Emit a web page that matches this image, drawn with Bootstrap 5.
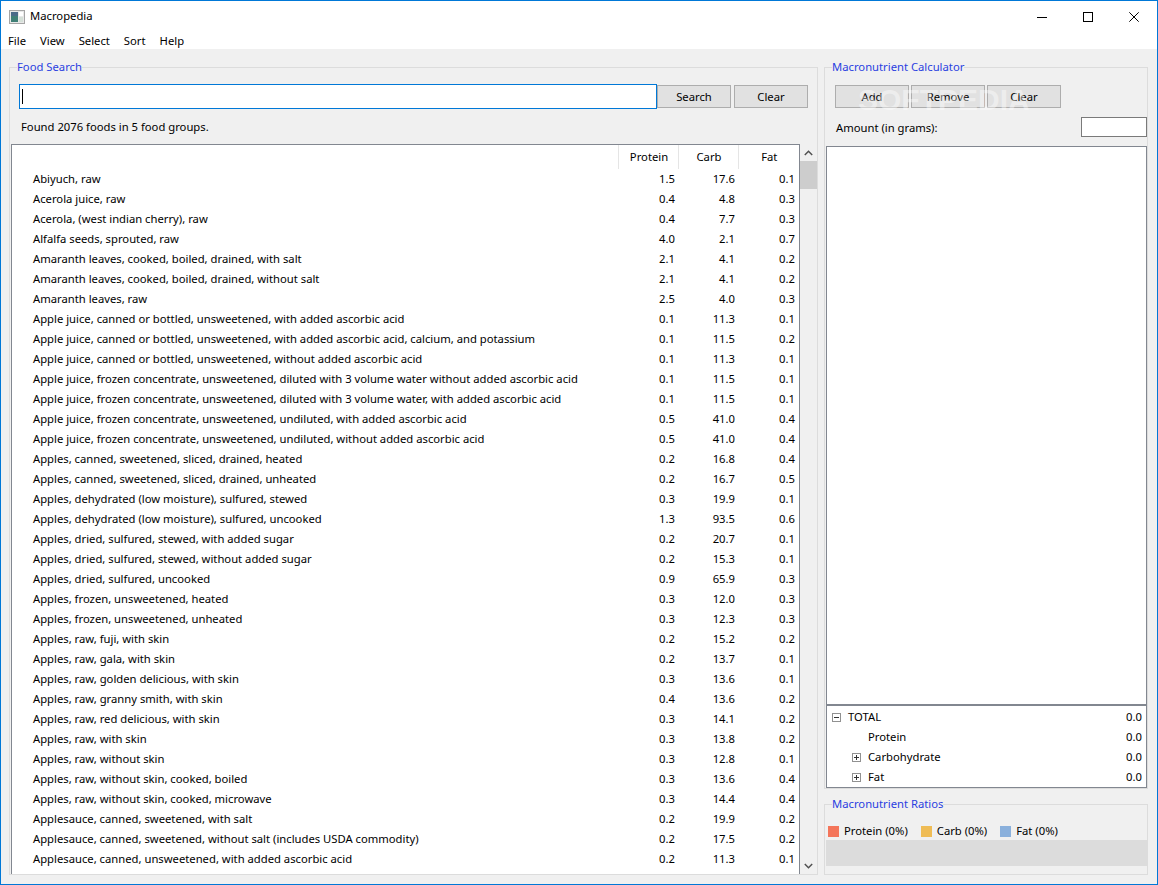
<!DOCTYPE html>
<html lang="en"><head><meta charset="utf-8"><title>Macropedia</title>
<link href="https://cdn.jsdelivr.net/npm/bootstrap@5.3.0/dist/css/bootstrap.min.css" rel="stylesheet">
<style>
html,body{margin:0;height:885px;overflow:hidden;background:#f0f0f0}
body{font-family:"Noto Sans","Liberation Sans",sans-serif;font-size:11.25px;line-height:16px;color:#000}
.app-win{height:885px;width:1158px;border:1px solid #0078d7;display:flex;flex-direction:column;background:#f0f0f0;position:relative}
.title-bar{height:31px;background:#fff;display:flex;align-items:center;padding-left:8px;flex:none}
.title-bar .t-name{margin-left:5px;padding-bottom:2px}
.win-ctl{margin-left:auto;display:flex}
.win-ctl span{width:46px;height:30px;display:flex;align-items:center;justify-content:center}
.menu-bar{height:17px;background:#fff;flex:none;display:flex;padding-left:7px;gap:14px;align-items:center;color:#000}
.work{flex:1;min-height:0;padding:10px 9px 9px 8px;display:flex;gap:6px}
.grp{border:1px solid #dcdcdc;margin:0;min-width:0;display:flex;flex-direction:column;padding:0}
.grp legend{float:none;width:auto;font-size:11.25px;line-height:16px;color:#2a3fe0;margin:0 0 0 7px;padding:0;height:16px}
.grp-left{width:809px;flex:none}
.grp-right-col{flex:1;min-width:0;display:flex;flex-direction:column;gap:7px}
.grp-calc{flex:1;min-height:0}
.grp-ratio{height:79px;flex:none}
.search-row{display:flex;margin:9px 9px 0 9px;align-items:flex-start}
.search-in{flex:none;width:638px;height:25px;border:1px solid #0078d7;background:#fff;display:flex;align-items:center}
.caret-bar{width:1px;height:15px;background:#000;margin-left:2px}
.win-btn.btn{font-size:11.25px;line-height:16px;background:#e1e1e1;border:1px solid #adadad;border-radius:0;color:#000;padding:0;width:74px;height:23px;margin-top:1px}
.search-row .win-btn+.win-btn{margin-left:3px}
.found-lbl{margin:10px 0 8px 11px;height:17px}
.list-wrap{flex:1;min-height:0;display:flex;margin-left:1px}
.food-pane{flex:1;min-width:0;border:1px solid #828790;border-bottom:0;background:#fff;overflow:hidden}
.food-tbl.table{table-layout:fixed;width:786px;margin:0;font-size:11.25px;color:#000;--bs-table-bg:transparent;border-collapse:collapse}
.food-tbl th,.food-tbl td{border:0;padding:0 3px 0 0;height:20px;line-height:20px;font-weight:400;white-space:nowrap;text-align:right;box-shadow:none}
.food-tbl td:first-child{text-align:left;padding-left:21px}
.food-tbl thead th{height:24px;text-align:center;padding:0 0 2px 2px;border-left:1px solid #e5e5e5;line-height:20px;border-bottom:0}
.food-tbl thead th:first-child{border-left:0}
.food-tbl thead tr{border:0}
.scroll-track{width:17px;flex:none;display:flex;flex-direction:column;align-items:stretch;background:#f0f0f0}
.sb-arrow{height:17px;display:flex;align-items:center;justify-content:center;flex:none}
.sb-thumb{height:28px;background:#cdcdcd;flex:none}
.sb-space{flex:1}
.calc-btns{display:flex;margin:10px 0 0 10px;gap:2px}
.calc-btns .win-btn.btn{margin-top:0}
.amt-row{display:flex;align-items:center;justify-content:space-between;margin:9px 0 0 11px;height:20px}
.amt-row span{position:relative;top:1px}
.amt-in{width:66px;height:20px;border:1px solid #7a7a7a;background:#fff}
.calc-list{flex:1;min-height:0;margin:9px 0 0 1px;border:1px solid #828790;background:#fff}
.calc-tree{height:83px;flex:none;margin:0 0 0 1px;border:1px solid #828790;background:#fff;padding-top:1px}
.tree-row{height:20px;display:flex;align-items:center;padding-right:4px}
.tree-tog{width:9px;height:9px;flex:none;margin-right:7px}
.lvl0{padding-left:5px}
.lvl1{padding-left:25px}
.lvl1b{padding-left:41px}
.tree-row b{font-weight:400;margin-left:auto}
.ratio-key{display:flex;margin:11px 0 0 3px;height:16px;align-items:center}
.ratio-swatch{width:11px;height:11px;flex:none;margin-right:5px}
.ratio-item{display:flex;align-items:center;margin-right:13px}
.ratio-bar{height:26px;background:#dcdcdc;margin:1px 0 0 1px}
.s-mark{position:absolute;left:857px;top:84px;font:700 30px/30px "Liberation Sans",sans-serif;color:rgba(255,255,255,.42);pointer-events:none}
</style></head><body>
<div class="app-win">
<div class="title-bar">
<svg width="16" height="14" viewBox="0 0 16 14"><rect x=".5" y=".5" width="15" height="13" fill="#e8e8e8" stroke="#a5a5a5"/><rect x="2" y="2" width="7" height="10" fill="#3f7f76"/><rect x="2" y="2" width="7" height="4" fill="#4a6a88"/><rect x="10" y="2" width="4" height="4" fill="#fff"/><rect x="10" y="7" width="4" height="5" fill="#d5e0d8"/></svg>
<span class="t-name">Macropedia</span>
<div class="win-ctl">
<span><svg width="10" height="10" viewBox="0 0 10 10"><path d="M0 5.5h10" stroke="#000"/></svg></span>
<span><svg width="10" height="10" viewBox="0 0 10 10"><rect x=".5" y=".5" width="9" height="9" fill="none" stroke="#000"/></svg></span>
<span><svg width="10" height="10" viewBox="0 0 10 10"><path d="M.3.3l9.4 9.4M9.7.3L.3 9.7" stroke="#000" fill="none"/></svg></span>
</div></div>
<div class="menu-bar"><span>File</span><span>View</span><span>Select</span><span>Sort</span><span>Help</span></div>
<div class="work">
<fieldset class="grp grp-left"><legend>Food Search</legend>
<div class="search-row"><div class="search-in"><i class="caret-bar"></i></div><button class="btn win-btn">Search</button><button class="btn win-btn">Clear</button></div>
<div class="found-lbl">Found 2076 foods in 5 food groups.</div>
<div class="list-wrap"><div class="food-pane">
<table class="table food-tbl"><colgroup><col style="width:606px"><col style="width:60px"><col style="width:60px"><col style="width:60px"></colgroup>
<thead><tr><th></th><th>Protein</th><th>Carb</th><th>Fat</th></tr></thead><tbody>
<tr><td>Abiyuch, raw</td><td>1.5</td><td>17.6</td><td>0.1</td></tr>
<tr><td>Acerola juice, raw</td><td>0.4</td><td>4.8</td><td>0.3</td></tr>
<tr><td>Acerola, (west indian cherry), raw</td><td>0.4</td><td>7.7</td><td>0.3</td></tr>
<tr><td>Alfalfa seeds, sprouted, raw</td><td>4.0</td><td>2.1</td><td>0.7</td></tr>
<tr><td>Amaranth leaves, cooked, boiled, drained, with salt</td><td>2.1</td><td>4.1</td><td>0.2</td></tr>
<tr><td>Amaranth leaves, cooked, boiled, drained, without salt</td><td>2.1</td><td>4.1</td><td>0.2</td></tr>
<tr><td>Amaranth leaves, raw</td><td>2.5</td><td>4.0</td><td>0.3</td></tr>
<tr><td>Apple juice, canned or bottled, unsweetened, with added ascorbic acid</td><td>0.1</td><td>11.3</td><td>0.1</td></tr>
<tr><td>Apple juice, canned or bottled, unsweetened, with added ascorbic acid, calcium, and potassium</td><td>0.1</td><td>11.5</td><td>0.2</td></tr>
<tr><td>Apple juice, canned or bottled, unsweetened, without added ascorbic acid</td><td>0.1</td><td>11.3</td><td>0.1</td></tr>
<tr><td>Apple juice, frozen concentrate, unsweetened, diluted with 3 volume water without added ascorbic acid</td><td>0.1</td><td>11.5</td><td>0.1</td></tr>
<tr><td>Apple juice, frozen concentrate, unsweetened, diluted with 3 volume water, with added ascorbic acid</td><td>0.1</td><td>11.5</td><td>0.1</td></tr>
<tr><td>Apple juice, frozen concentrate, unsweetened, undiluted, with added ascorbic acid</td><td>0.5</td><td>41.0</td><td>0.4</td></tr>
<tr><td>Apple juice, frozen concentrate, unsweetened, undiluted, without added ascorbic acid</td><td>0.5</td><td>41.0</td><td>0.4</td></tr>
<tr><td>Apples, canned, sweetened, sliced, drained, heated</td><td>0.2</td><td>16.8</td><td>0.4</td></tr>
<tr><td>Apples, canned, sweetened, sliced, drained, unheated</td><td>0.2</td><td>16.7</td><td>0.5</td></tr>
<tr><td>Apples, dehydrated (low moisture), sulfured, stewed</td><td>0.3</td><td>19.9</td><td>0.1</td></tr>
<tr><td>Apples, dehydrated (low moisture), sulfured, uncooked</td><td>1.3</td><td>93.5</td><td>0.6</td></tr>
<tr><td>Apples, dried, sulfured, stewed, with added sugar</td><td>0.2</td><td>20.7</td><td>0.1</td></tr>
<tr><td>Apples, dried, sulfured, stewed, without added sugar</td><td>0.2</td><td>15.3</td><td>0.1</td></tr>
<tr><td>Apples, dried, sulfured, uncooked</td><td>0.9</td><td>65.9</td><td>0.3</td></tr>
<tr><td>Apples, frozen, unsweetened, heated</td><td>0.3</td><td>12.0</td><td>0.3</td></tr>
<tr><td>Apples, frozen, unsweetened, unheated</td><td>0.3</td><td>12.3</td><td>0.3</td></tr>
<tr><td>Apples, raw, fuji, with skin</td><td>0.2</td><td>15.2</td><td>0.2</td></tr>
<tr><td>Apples, raw, gala, with skin</td><td>0.2</td><td>13.7</td><td>0.1</td></tr>
<tr><td>Apples, raw, golden delicious, with skin</td><td>0.3</td><td>13.6</td><td>0.1</td></tr>
<tr><td>Apples, raw, granny smith, with skin</td><td>0.4</td><td>13.6</td><td>0.2</td></tr>
<tr><td>Apples, raw, red delicious, with skin</td><td>0.3</td><td>14.1</td><td>0.2</td></tr>
<tr><td>Apples, raw, with skin</td><td>0.3</td><td>13.8</td><td>0.2</td></tr>
<tr><td>Apples, raw, without skin</td><td>0.3</td><td>12.8</td><td>0.1</td></tr>
<tr><td>Apples, raw, without skin, cooked, boiled</td><td>0.3</td><td>13.6</td><td>0.4</td></tr>
<tr><td>Apples, raw, without skin, cooked, microwave</td><td>0.3</td><td>14.4</td><td>0.4</td></tr>
<tr><td>Applesauce, canned, sweetened, with salt</td><td>0.2</td><td>19.9</td><td>0.2</td></tr>
<tr><td>Applesauce, canned, sweetened, without salt (includes USDA commodity)</td><td>0.2</td><td>17.5</td><td>0.2</td></tr>
<tr><td>Applesauce, canned, unsweetened, with added ascorbic acid</td><td>0.2</td><td>11.3</td><td>0.1</td></tr>
</tbody></table></div>
<div class="scroll-track"><div class="sb-arrow"><svg width="9" height="6" viewBox="0 0 9 6"><path d="M.8 5L4.5 1.3 8.2 5" fill="none" stroke="#505050" stroke-width="1.5"/></svg></div><div class="sb-thumb"></div><div class="sb-space"></div><div class="sb-arrow"><svg width="9" height="6" viewBox="0 0 9 6"><path d="M.8 1L4.5 4.7 8.2 1" fill="none" stroke="#505050" stroke-width="1.5"/></svg></div></div>
</div></fieldset>
<div class="grp-right-col">
<fieldset class="grp grp-calc"><legend>Macronutrient Calculator</legend>
<div class="calc-btns"><button class="btn win-btn">Add</button><button class="btn win-btn">Remove</button><button class="btn win-btn">Clear</button></div>
<div class="amt-row"><span>Amount (in grams):</span><div class="amt-in"></div></div>
<div class="calc-list"></div>
<div class="calc-tree">
<div class="tree-row lvl0"><svg class="tree-tog" viewBox="0 0 9 9"><rect x=".5" y=".5" width="8" height="8" fill="#fff" stroke="#919191"/><path d="M2 4.5h5" stroke="#333"/></svg><span>TOTAL</span><b>0.0</b></div>
<div class="tree-row lvl1b"><span>Protein</span><b>0.0</b></div>
<div class="tree-row lvl1"><svg class="tree-tog" viewBox="0 0 9 9"><rect x=".5" y=".5" width="8" height="8" fill="#fff" stroke="#919191"/><path d="M2 4.5h5M4.5 2v5" stroke="#333"/></svg><span>Carbohydrate</span><b>0.0</b></div>
<div class="tree-row lvl1"><svg class="tree-tog" viewBox="0 0 9 9"><rect x=".5" y=".5" width="8" height="8" fill="#fff" stroke="#919191"/><path d="M2 4.5h5M4.5 2v5" stroke="#333"/></svg><span>Fat</span><b>0.0</b></div>
</div></fieldset>
<fieldset class="grp grp-ratio"><legend>Macronutrient Ratios</legend>
<div class="ratio-key"><div class="ratio-item"><i class="ratio-swatch" style="background:#f4755a"></i>Protein (0%)</div><div class="ratio-item"><i class="ratio-swatch" style="background:#efbc55"></i>Carb (0%)</div><div class="ratio-item"><i class="ratio-swatch" style="background:#8ab0dc"></i>Fat (0%)</div></div>
<div class="ratio-bar"></div>
</fieldset>
</div>
</div>
<div class="s-mark">SOFTPEDIA</div>
</div>
<script src="https://cdn.jsdelivr.net/npm/bootstrap@5.3.0/dist/js/bootstrap.bundle.min.js"></script>
</body></html>
